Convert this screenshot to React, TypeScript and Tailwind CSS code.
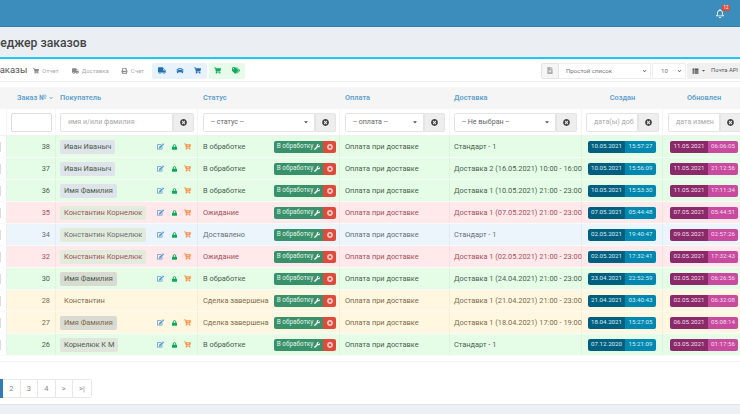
import { FaCar, FaCartPlus, FaCaretDown, FaChevronDown, FaEdit, FaFileAlt, FaLock, FaPrint, FaShoppingCart, FaTags, FaThList, FaTimesCircle, FaTruck, FaWrench, FaRegBell } from "react-icons/fa";

const grid = "grid grid-cols-[7px_49px_142px_142px_110px_132px_81px_77px]";
const cell = "h-full flex items-center border-r border-[#0000000a]";

type Kind = "green" | "red" | "blue" | "yellow";

const kinds: Record<Kind, string> = {
    green: "bg-[#e5fde7] text-[#4a5f4f]",
    red: "bg-[#ffe9ea] text-[#a2525c]",
    blue: "bg-[#ecf5fb] text-[#66707a]",
    yellow: "bg-[#fff7e0] text-[#7d6c4e]",
};

const orders = [
    { id: 38, name: "Иван Иваныч", chip: "bg-[#dfe3ea]", status: "В обработке", ship: "Стандарт - 1", kind: "green", cd: "10.05.2021", ct: "15:57:27", ud: "11.05.2021", ut: "06:06:05" },
    { id: 37, name: "Иван Иваныч", chip: "bg-[#dfe3ea]", status: "В обработке", ship: "Доставка 2 (16.05.2021) 10:00 - 16:00", kind: "green", cd: "10.05.2021", ct: "15:56:09", ud: "11.05.2021", ut: "21:12:56" },
    { id: 36, name: "Имя Фамилия", chip: "bg-[#dfe3ea]", status: "В обработке", ship: "Доставка 1 (10.05.2021) 21:00 - 23:00", kind: "green", cd: "10.05.2021", ct: "15:53:30", ud: "11.05.2021", ut: "17:11:34" },
    { id: 35, name: "Константин Корнелюк", chip: "bg-[#e3ebdc]", status: "Ожидание", ship: "Доставка 1 (07.05.2021) 21:00 - 23:00", kind: "red", cd: "07.05.2021", ct: "05:44:48", ud: "07.05.2021", ut: "05:44:51" },
    { id: 34, name: "Константин Корнелюк", chip: "bg-[#e3ebdc]", status: "Доставлено", ship: "Стандарт - 1", kind: "blue", cd: "02.05.2021", ct: "19:40:47", ud: "09.05.2021", ut: "02:57:26" },
    { id: 32, name: "Константин Корнелюк", chip: "bg-[#e3ebdc]", status: "Ожидание", ship: "Доставка 1 (02.05.2021) 21:00 - 23:00", kind: "red", cd: "02.05.2021", ct: "17:32:41", ud: "02.05.2021", ut: "17:32:43" },
    { id: 30, name: "Имя Фамилия", chip: "bg-[#d9dad2]", status: "В обработке", ship: "Доставка 1 (24.04.2021) 21:00 - 23:00", kind: "green", cd: "23.04.2021", ct: "22:52:59", ud: "02.05.2021", ut: "06:26:56" },
    { id: 28, name: "Константин", chip: "", status: "Сделка завершена", ship: "Доставка 1 (21.04.2021) 21:00 - 23:00", kind: "yellow", cd: "21.04.2021", ct: "03:40:43", ud: "02.05.2021", ut: "06:32:08" },
    { id: 27, name: "Имя Фамилия", chip: "bg-[#d9dad2]", status: "Сделка завершена", ship: "Доставка 1 (18.04.2021) 17:00 - 19:00", kind: "yellow", cd: "18.04.2021", ct: "15:27:05", ud: "06.05.2021", ut: "05:08:14" },
    { id: 26, name: "Корнелюк К М", chip: "bg-[#e0e6dc]", status: "В обработке", ship: "Стандарт - 1", kind: "green", cd: "07.12.2020", ct: "15:21:09", ud: "03.05.2021", ut: "01:17:56" },
] as const;

const Clear = ({ width }: { width: string }) => (
    <span className={`${width} h-[19px] flex items-center justify-center bg-[#eeeeee] border border-[#e4e4e4] rounded-r-[2px] shrink-0`}>
        <FaTimesCircle className="w-[7px] h-[7px] text-[#444]" />
    </span>
);

const Filter = ({ label, inputWidth, select, light }: { label: string; inputWidth: string; select?: boolean; light?: boolean }) => (
    <div className="flex items-center">
        <div className={`${inputWidth} h-[19px] flex items-center justify-between pl-[7px] pr-[5px] border border-[#e4e4e4] rounded-l-[2px] bg-white text-[7.1px] ${light ? "text-[#aaaaaa]" : "text-[#666666]"}`}>
            <span className="whitespace-nowrap">{label}</span>
            {select && <FaCaretDown className="w-[6px] h-[6px] text-[#555] shrink-0" />}
        </div>
        <Clear width="w-[21px]" />
    </div>
);

const Row = ({ o }: { o: (typeof orders)[number] }) => (
    <div className={`${grid} h-[22px] items-center text-[7.4px] border-b border-[#00000006]`}>
        <div className="h-full bg-white border-r border-[#eeeeee] flex items-center">
            <span className="w-[1px] h-[10px] bg-[#dddddd]" />
        </div>
        <div className={`${kinds[o.kind]} ${cell} justify-end pr-[5px]`}>{o.id}</div>
        <div className={`${kinds[o.kind]} ${cell} pl-[4px]`}>
            <span className={`${o.chip} h-[14px] px-[4px] flex items-center rounded-[2px] whitespace-nowrap`}>{o.name}</span>
            {o.chip && (
                <span className="ml-auto mr-[6px] flex items-center">
                    <FaEdit className="w-[7px] h-[7px] text-[#5b9bd5] mr-[8px]" />
                    <FaLock className="w-[5px] h-[6px] text-[#12a85c] mr-[7px]" />
                    <FaCartPlus className="w-[7px] h-[7px] text-[#ff8c42]" />
                </span>
            )}
        </div>
        <div className={`${kinds[o.kind]} ${cell} justify-between pl-[5px] pr-[3px]`}>
            <span className="whitespace-nowrap">{o.status}</span>
            <span className="flex h-[12px] rounded-[2px] overflow-hidden text-[6.4px] text-[#e4f3ea]">
                <span className="w-[49px] bg-[#38916a] flex items-center justify-center gap-[1px] whitespace-nowrap">
                    В обработку <FaWrench className="w-[6px] h-[6px] text-white" />
                </span>
                <span className="w-[13px] bg-[#e04a3a] flex items-center justify-center">
                    <FaTimesCircle className="w-[6px] h-[6px] text-[#ffd5d0]" />
                </span>
            </span>
        </div>
        <div className={`${kinds[o.kind]} ${cell} pl-[5px] whitespace-nowrap`}>Оплата при доставке</div>
        <div className={`${kinds[o.kind]} ${cell} pl-[4px] whitespace-nowrap`}>{o.ship}</div>
        <div className={`${kinds[o.kind]} ${cell} pl-[6px]`}>
            <span className="flex h-[12px] rounded-[2px] overflow-hidden text-[6.2px] text-[#d8edf5]">
                <span className="w-[37px] bg-[#005f7f] flex items-center justify-center">{o.cd}</span>
                <span className="w-[31px] bg-[#0088b0] flex items-center justify-center">{o.ct}</span>
            </span>
        </div>
        <div className={`${kinds[o.kind]} h-full flex items-center pl-[7px]`}>
            <span className="flex h-[12px] rounded-[2px] overflow-hidden text-[6.2px] text-[#f3dcec]">
                <span className="w-[38px] bg-[#8a2a68] flex items-center justify-center">{o.ud}</span>
                <span className="w-[30px] bg-[#c84ba0] flex items-center justify-center">{o.ut}</span>
            </span>
        </div>
    </div>
);

export default function App() {
    return (
        <div className="w-[740px] h-[414px] overflow-hidden bg-white font-['Roboto',sans-serif] flex flex-col">
            <header className="h-[27px] shrink-0 bg-[#3c8dbc] border-b border-[#367fa9] flex items-center justify-end pr-[16px]">
                <span className="relative">
                    <FaRegBell className="w-[8px] h-[9px] text-white" />
                    <span className="absolute -top-[4px] -right-[6px] w-[8px] h-[6px] bg-[#dd4b39] rounded-[1px] text-white text-[4.5px] leading-[6px] text-center">12</span>
                </span>
            </header>

            <div className="h-[32px] shrink-0 bg-[#ebeef3] border-b-2 border-[#1fc8f0] flex items-center">
                <h1 className="-ml-[24px] text-[12.2px] font-medium text-[#444] whitespace-nowrap pt-[2px]">Менеджер заказов</h1>
            </div>

            <div className="h-[23px] shrink-0 border-b border-[#eeeeee] flex items-center pt-[1px]">
                <span className="-ml-[6px] text-[9.5px] text-[#555] mr-[6px]">Заказы</span>
                <span className="flex items-center gap-[3px] text-[6px] text-[#aaaaaa] mr-[13px]"><FaShoppingCart className="w-[6px] h-[6px] text-[#888]" /> Отчет</span>
                <span className="flex items-center gap-[3px] text-[6px] text-[#aaaaaa] mr-[12px]"><FaTruck className="w-[7px] h-[6px] text-[#888]" /> Доставка</span>
                <span className="flex items-center gap-[3px] text-[6px] text-[#aaaaaa] mr-[8px]"><FaPrint className="w-[7px] h-[6px] text-[#888]" /> Счет</span>
                <span className="w-[55px] h-[16px] bg-[#e8f2fd] rounded-l-[2px] flex items-center justify-between px-[6px] text-[#1f6fb5]">
                    <FaTruck className="w-[8px] h-[7px]" />
                    <FaCar className="w-[8px] h-[7px]" />
                    <FaShoppingCart className="w-[7px] h-[7px]" />
                </span>
                <span className="ml-[2px] w-[36px] h-[16px] bg-[#e6fbe9] rounded-r-[2px] flex items-center justify-between px-[5px] text-[#16a85a]">
                    <FaShoppingCart className="w-[7px] h-[7px]" />
                    <FaTags className="w-[8px] h-[7px]" />
                </span>
                <div className="ml-auto flex items-center h-[16px] text-[6.1px] text-[#777]">
                    <span className="w-[18px] h-full bg-[#f5f5f5] border border-[#e4e4e4] rounded-l-[2px] flex items-center justify-center"><FaFileAlt className="w-[6px] h-[7px] text-[#aaa]" /></span>
                    <span className="w-[92px] h-full border-y border-r border-[#eeeeee] flex items-center justify-between pl-[7px] pr-[3px]">Простой список <FaChevronDown className="w-[5px] h-[4px] text-[#555]" /></span>
                    <span className="ml-[1px] w-[34px] h-full border border-[#eeeeee] flex items-center justify-between pl-[8px] pr-[3px]">10 <FaChevronDown className="w-[5px] h-[4px] text-[#555]" /></span>
                    <span className="ml-[1px] w-[53px] h-full bg-[#f0f0f0] rounded-l-[2px] flex items-center pl-[5px] gap-[2px] text-[5.8px] text-[#555] whitespace-nowrap">
                        <FaThList className="w-[7px] h-[6px] text-[#555]" /><FaCaretDown className="w-[5px] h-[5px] mr-[3px]" /> Почта API
                    </span>
                </div>
            </div>

            <div className={`${grid} mt-[5px] h-[22px] shrink-0 items-center bg-[#f5f5f5] text-[7.4px] font-semibold text-[#5f9fd0]`}>
                <div />
                <div className="flex items-center gap-[2px] pl-[10px] whitespace-nowrap">Заказ № <FaChevronDown className="w-[4px] h-[4px]" /></div>
                <div className="pl-[4px]">Покупатель</div>
                <div className="pl-[5px]">Статус</div>
                <div className="pl-[5px]">Оплата</div>
                <div className="pl-[4px]">Доставка</div>
                <div className="text-center">Создан</div>
                <div className="text-center pl-[5px]">Обновлен</div>
            </div>

            <div className={`${grid} h-[27px] shrink-0 border-b border-[#f2f2f2]`}>
                <div className={cell} />
                <div className={`${cell} pl-[4px]`}><div className="w-[41px] h-[19px] border border-[#dddddd] rounded-[2px]" /></div>
                <div className={`${cell} pl-[4px]`}><Filter label="имя и/или фамилия" inputWidth="w-[113px]" light /></div>
                <div className={`${cell} pl-[5px]`}><Filter label="-- статус --" inputWidth="w-[112px]" select /></div>
                <div className={`${cell} pl-[5px]`}><Filter label="-- оплата --" inputWidth="w-[79px]" select /></div>
                <div className={`${cell} pl-[4px]`}><Filter label="-- Не выбран --" inputWidth="w-[102px]" select /></div>
                <div className={`${cell} pl-[4px]`}><Filter label="дата(ы) доб" inputWidth="w-[52px]" light /></div>
                <div className="h-full flex items-center pl-[5px]"><Filter label="дата измен" inputWidth="w-[52px]" light /></div>
            </div>

            <div className="shrink-0">
                {orders.map((o) => <Row key={o.id} o={o} />)}
            </div>

            <div className="mt-[5px] h-[1px] shrink-0 bg-[#f4f4f4]" />

            <nav className="mt-[17px] ml-[-14px] h-[19px] shrink-0 flex text-[7.5px] text-[#888]">
                <span className="w-[17px] bg-[#337ab7] rounded-l-[2px]" />
                {["2", "3", "4", ">", ">|"].map((p) => (
                    <span key={p} className={`${p === ">|" ? "w-[19px] rounded-r-[2px]" : "w-[17.5px]"} border-y border-r border-[#e8e8e8] flex items-center justify-center`}>{p}</span>
                ))}
            </nav>

            <footer className="mt-auto h-[10px] shrink-0 bg-[#ecf0f5] border-t border-[#e2e5ea]" />
        </div>
    );
}
